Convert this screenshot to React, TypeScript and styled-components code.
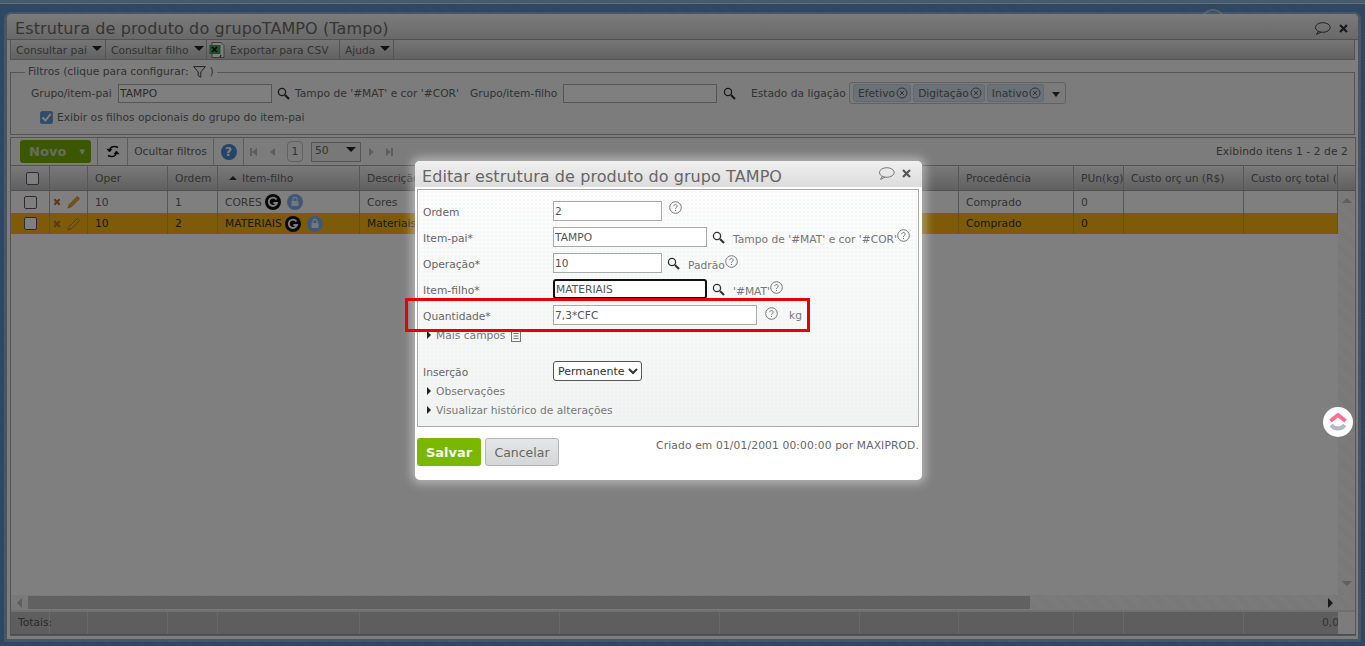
import React from "react";
import styled, { createGlobalStyle } from "styled-components";

const COLS = "39px 38px 80px 50px 142px 200px 160px 140px 99px 115px 50px 120px 94px";
const FONT = `"DejaVu Sans", Verdana, sans-serif`;
const SIZE = "10.7px";

const Global = createGlobalStyle`
  html, body { margin: 0; padding: 0; background: #5e93c9; }
  * { box-sizing: border-box; }
  body { font-family: ${FONT}; font-size: ${SIZE}; color: #555; }
`;

const Page = styled.div`
  position: relative; width: 1365px; height: 646px; overflow: hidden;
  display: flex; flex-direction: column;
  background: #5f92c8 repeating-linear-gradient(45deg, #5a8cc2 0 1px, #6195cb 1px 2px);
`;
const TopBand = styled.div`
  height: 14px; flex: none; border-top: 3px solid #8fb6d8; box-shadow: inset 0 1px 0 #c4dcf0;
  overflow: hidden; display: flex; justify-content: flex-end; padding: 6px 139px 0 0;
`;
const Avatar = styled.span`
  width: 26px; height: 26px; flex: none; border-radius: 50%; border: 2px solid #a8bed2;
`;
const Win = styled.div`
  flex: 1; margin: 0 6px 6px 6px; display: flex; flex-direction: column; min-height: 0;
  background: #fbfbfb; border: 1px solid #9fa9ae; border-top: 0; border-radius: 5px 5px 0 0;
  padding-bottom: 3px; box-shadow: 0 0 0 2px rgba(220, 225, 230, .35);
`;
const WinTitle = styled.div`
  height: 26px; flex: none; display: flex; align-items: center; justify-content: space-between;
  padding: 4px 10px 0 8px; border-bottom: 1px solid #a3a3a3; border-radius: 5px 5px 0 0;
  background: linear-gradient(#f6f6f6, #d2d2d2);
  font-size: 16px; letter-spacing: .1px; color: #6a6a6a; white-space: nowrap;
`;
const TitleTools = styled.div`display: flex; align-items: center; gap: 8px;`;
const Menu = styled.div`
  height: 20px; flex: none; margin: 0 3px 0 3px; display: flex; align-items: stretch;
  border: 1px solid #a8a8a8; border-top: 0; background: linear-gradient(#ececec, #c4c4c4);
`;
const MenuItem = styled.div<{ $w: number; $pad?: number }>`
  width: ${(p) => p.$w}px; display: flex; align-items: center; gap: 5px; padding: 1px 0 0 ${(p) => p.$pad ?? 5}px;
  border-right: 1px solid #a8a8a8; white-space: nowrap; font-size: ${SIZE}; color: #666;
`;
const Caret = styled.span`
  width: 0; height: 0; border-left: 5px solid transparent; border-right: 5px solid transparent;
  border-top: 5px solid #222; margin-bottom: 3px;
`;
const Filters = styled.fieldset`
  margin: 5px 3px 0 3px; padding: 1px 0 0 20px; height: 70px; flex: none;
  border: 1px solid #aaa; background: #f8f8f8; min-width: 0;
`;
const Legend = styled.legend`
  margin-left: -6px; padding: 0 3px; height: 14px; line-height: 16px; display: flex; align-items: center; gap: 4px;
  font-size: ${SIZE}; color: #666;
`;
const FilterRow = styled.div`display: flex; align-items: center; height: 19px; margin-top: 4px;`;
const Caption = styled.span<{ $w?: number }>`
  ${(p) => (p.$w ? `width: ${p.$w}px;` : "")} flex: none; white-space: nowrap; color: #666; font-size: ${SIZE};
`;
const TextField = styled.input<{ $w: number; $focus?: boolean }>`
  width: ${(p) => p.$w}px; height: 20px; flex: none; padding: 0 1px; font: ${SIZE} ${FONT}; color: #555;
  background: #fff; outline: none; border: 1px solid #aaa;
  ${(p) => (p.$focus ? "border: 2px solid #111; border-radius: 3px;" : "")}
`;
const FilterInput = styled(TextField)`height: 19px;`;
const Lens = styled.span<{ $l?: number; $r?: number }>`
  display: inline-flex; flex: none; margin-left: ${(p) => p.$l ?? 5}px; margin-right: ${(p) => p.$r ?? 5}px;
`;
const Chips = styled.div`
  margin: -1px 0 0 4px; width: 217px; height: 22px; display: flex; align-items: center; gap: 2px; padding-left: 3px;
  border: 1px solid #c4c4c4; border-radius: 3px; background: #f4f4f4;
`;
const Chip = styled.span`
  height: 18px; display: inline-flex; align-items: center; gap: 1px; padding: 0 2px 0 4px;
  background: #d6e2ec; border: 1px dotted #b4c6d6; border-radius: 3px; color: #666; font-size: ${SIZE}; white-space: nowrap;
`;
const ChipCaret = styled(Caret)`margin: 2px 0 0 6px; border-width: 5px 4px 0 4px; border-top-color: #333;`;
const OptionRow = styled.label`
  display: flex; align-items: center; gap: 4px; margin: 8px 0 0 9px; color: #666; font-size: ${SIZE}; white-space: nowrap;
`;
const Check = styled.span<{ $on?: boolean }>`
  width: 13px; height: 13px; flex: none; display: inline-flex; align-items: center; justify-content: center;
  border-radius: 2px; border: 1px solid ${(p) => (p.$on ? "#6f9fd0" : "#60506a")};
  background: ${(p) => (p.$on ? "#5f9bd6" : "#fff")};
`;
const GridBox = styled.div`
  flex: 1; min-height: 0; margin: 2px 2px 0 3px; border: 1px solid #aaa; display: flex; flex-direction: column; background: #fff;
`;
const Toolbar = styled.div`
  height: 28px; flex: none; display: flex; align-items: center; background: #f8f8f8; border-bottom: 1px solid #a6a6a6;
`;
const Novo = styled.div`
  width: 71px; height: 23px; margin-left: 9px; display: flex; align-items: center; justify-content: space-between;
  padding: 0 6px 0 9px; background: #77b000; border-radius: 3px; color: #cfd6c0; font-weight: 700; font-size: 13px; letter-spacing: .1px;
`;
const NovoCaret = styled.span`font-size: 7px; color: #ddd;`;
const ToolCell = styled.div<{ $w: number; $line?: boolean }>`
  width: ${(p) => p.$w}px; height: 27px; flex: none; display: flex; align-items: center; justify-content: center;
  ${(p) => (p.$line ? "border-left: 1px solid #bbb;" : "")} color: #666; white-space: nowrap; font-size: ${SIZE};
`;
const HelpDot = styled.span`
  width: 16px; height: 16px; border-radius: 50%; background: #4a8ad0; color: #fff; font: 700 12px ${FONT};
  display: inline-flex; align-items: center; justify-content: center;
`;
const PageBox = styled.span`
  width: 16px; height: 21px; margin-left: 12px; border: 1px solid #c4c4c4; border-radius: 4px; display: inline-flex; align-items: center; justify-content: center; color: #666;
`;
const SizeBox = styled.span`
  width: 50px; height: 20px; margin-left: 8px; border: 1px solid #a8a8a8; background: #f0f0f0; display: inline-flex; align-items: center; justify-content: space-between; padding: 0 4px 2px 3px; color: #666;
`;
const Pager = styled.span<{ $l: number; $r?: boolean }>`
  width: 0; height: 0; margin-left: ${(p) => p.$l}px; border-top: 4px solid transparent; border-bottom: 4px solid transparent;
  ${(p) => (p.$r ? "border-left: 5px solid #bbb;" : "border-right: 5px solid #bbb;")}
`;
const PagerBar = styled.span`width: 2px; height: 8px; background: #bbb;`;
const PagerBarLeft = styled(PagerBar)`margin-left: 6px;`;
const Showing = styled.div`margin-left: auto; margin-right: 7px; color: #666; white-space: nowrap; font-size: ${SIZE}; letter-spacing: .08px;`;

const RowGrid = styled.div<{ $h: number; $bg: string }>`
  height: ${(p) => p.$h}px; flex: none; display: flex; background: ${(p) => p.$bg};
`;
const RowCells = styled.div`
  width: 1327px; overflow: hidden; display: grid; grid-template-columns: ${COLS}; flex: none;
`;
const Cell = styled.div`
  display: flex; align-items: center; gap: 3px; padding: 0 7px; overflow: hidden; white-space: nowrap;
  border-right: 1px solid #aeaeae; color: #666; font-size: ${SIZE};
`;
const HeadCheckCell = styled(Cell)`padding: 0 0 0 15px;`;
const HeadRow = styled(RowGrid)`border-bottom: 1px solid #a0a0a0;`;
const DataCell = styled(Cell)<{ $sel?: boolean }>`
  color: ${(p) => (p.$sel ? "#333" : "#666")};
  ${(p) => (p.$sel ? "border-right-color: #c9a040;" : "")}
`;
const ActionCell = styled(DataCell)`padding: 0 0 0 3px; gap: 6px;`;
const CheckCell = styled(DataCell)`padding: 0 0 0 13px;`;
const SortCaret = styled.span`
  width: 0; height: 0; border-left: 4px solid transparent; border-right: 4px solid transparent; border-bottom: 4px solid #333; margin: 0 2px 0 4px;
`;
const Body = styled.div`flex: 1; min-height: 0; display: flex; flex-direction: column;`;
const BodyMain = styled.div`flex: 1; min-height: 0; display: flex;`;
const Rows = styled.div`flex: 1; min-width: 0; display: flex; flex-direction: column;`;
const VScroll = styled.div`
  width: 17px; flex: none; display: flex; flex-direction: column; justify-content: space-between; align-items: center; padding: 7px 0 9px;
  background: #f4f4f4 repeating-linear-gradient(45deg, #eee 0 1px, #f9f9f9 1px 2px);
`;
const HScroll = styled.div`
  height: 15px; flex: none; display: flex; align-items: center; background: #f4f4f4 repeating-linear-gradient(45deg, #eee 0 1px, #f9f9f9 1px 2px);
`;
const HThumb = styled.div`margin-left: 6px; width: 1002px; height: 13px; background: #c2c2c2;`;
const ArrowUp = styled.span<{ $down?: boolean }>`
  width: 0; height: 0; border-left: 5px solid transparent; border-right: 5px solid transparent;
  ${(p) => (p.$down ? "border-top: 5px solid #bfbfbf;" : "border-bottom: 5px solid #bfbfbf;")}
`;
const ArrowSide = styled.span<{ $r?: boolean }>`
  width: 0; height: 0; border-top: 5px solid transparent; border-bottom: 5px solid transparent;
  ${(p) => (p.$r ? "border-left: 5px solid #333; margin-left: 298px;" : "border-right: 5px solid #bbb; margin-left: 6px;")}
`;
const Totals = styled.div`
  height: 25px; flex: none; display: flex; border-top: 2px solid #e0e0e0; border-bottom: 1px solid #999;
  background: #f8f8f8;
`;
const TotalCells = styled(RowCells)`background: #bcbcbc;`;
const TotalCell = styled(Cell)`border-right-color: #d0d0d0; padding-bottom: 2px;`;
const TotalLabel = styled(TotalCell)`overflow: visible; color: #555;`;
const TotalEnd = styled(TotalCell)`padding: 0 0 2px 78px; border-right: 0;`;

const Scrim = styled.div`position: absolute; inset: 0; background: rgba(0, 0, 0, .5);`;
const Dialog = styled.div`
  position: absolute; left: 415px; top: 161px; width: 507px; height: 319px; display: flex; flex-direction: column;
  background: #fff; border-radius: 5px; box-shadow: 0 0 10px 4px rgba(255, 255, 255, .4);
`;
const DlgTitle = styled.div`
  height: 26px; flex: none; display: flex; align-items: center; justify-content: space-between; padding: 4px 11px 0 7px;
  border-radius: 5px 5px 0 0; background: linear-gradient(#f0f0f0, #dcdcdc);
  font-size: 16px; letter-spacing: .08px; color: #666; white-space: nowrap;
`;
const DlgTools = styled(TitleTools)`gap: 7px; margin-top: -5px;`;
const Panel = styled.div`
  margin: 2px 3px 0 2px; height: 238px; flex: none; border: 1px solid #aaa; padding: 11px 0 0 5px;
  background: radial-gradient(#eceeee .6px, transparent .8px) 0 0 / 4px 4px, linear-gradient(#fdfdfd, #f1f3f3);
`;
const FormRow = styled.div`
  position: relative; display: flex; align-items: center; height: 20px; margin-bottom: 6px;
`;
const Label = styled.span`width: 130px; flex: none; padding-top: 3px; color: #666; font-size: ${SIZE};`;
const Hint = styled.span`color: #777; font-size: ${SIZE}; white-space: nowrap; margin-top: 4px;`;
const UnitHint = styled(Hint)`margin-top: 0;`;
const QHelp = styled.span<{ $l?: number; $t?: number; $r?: number }>`
  display: inline-flex; flex: none; margin-left: ${(p) => p.$l ?? 0}px; margin-right: ${(p) => p.$r ?? 0}px;
  margin-top: ${(p) => p.$t ?? 0}px;
`;
const RedBox = styled.div`
  position: absolute; left: -18px; top: -7px; width: 405px; height: 34px; border: 3px solid #e60000; pointer-events: none;
`;
const Toggle = styled.div<{ $t?: number }>`
  display: flex; align-items: center; gap: 5px; height: 14px; margin: ${(p) => p.$t ?? 0}px 0 0 4px; color: #777; font-size: ${SIZE}; white-space: nowrap;
`;
const Tri = styled.span`
  width: 0; height: 0; border-top: 4px solid transparent; border-bottom: 4px solid transparent; border-left: 4px solid #222;
`;
const InsertRow = styled(FormRow)`margin: 19px 0 3px;`;
const Select = styled.select`
  width: 89px; height: 20px; font: 11px ${FONT}; color: #333; background: #fff; border: 1px solid #555; border-radius: 3px; padding: 0;
`;
const Footer = styled.div`
  display: flex; align-items: flex-start; margin: 11px 3px 0 2px;
`;
const Save = styled.button`
  width: 64px; height: 28px; border: 0; border-radius: 3px; background: #7ab800; color: #f4f4f4; font: 700 13px ${FONT}; padding: 0;
`;
const Cancel = styled.button`
  width: 74px; height: 28px; margin-left: 4px; border: 1px solid #b5b5b5; border-radius: 3px; background: linear-gradient(#e4e6e8, #d4d6d8);
  color: #666; font: 12.5px ${FONT}; padding: 1px 0 0;
`;
const Created = styled.div`margin-left: auto; margin-top: 1px; color: #666; font-size: ${SIZE}; letter-spacing: .14px; white-space: nowrap;`;
const Logo = styled.div`
  position: absolute; left: 1323px; top: 407px; width: 30px; height: 30px; border-radius: 50%; background: #fff;
  display: flex; align-items: center; justify-content: center;
`;

const Search = ({ c = "#333" }: { c?: string }) => (
  <svg width="13" height="13" viewBox="0 0 13 13" fill="none" stroke={c}>
    <circle cx="5" cy="5" r="3.6" strokeWidth="1.3" />
    <path d="M8 8l4 4" strokeWidth="2.2" />
  </svg>
);
const Help = ({ s = 13, c = "#777" }: { s?: number; c?: string }) => (
  <svg width={s} height={s} viewBox="0 0 13 13" fill="none" stroke={c}>
    <circle cx="6.5" cy="6.5" r="5.8" />
    <path d="M4.8 5.2c0-2.2 3.4-2.2 3.4-.1 0 1.3-1.7 1.3-1.7 2.8" />
    <path d="M6.5 9v1" />
  </svg>
);
const Bubble = ({ c = "#444" }: { c?: string }) => (
  <svg width="17" height="13" viewBox="0 0 17 13" fill="none" stroke={c}>
    <ellipse cx="8.8" cy="5.5" rx="7.4" ry="4.8" />
    <path d="M4.5 9.2 2.5 12.4 7 10.2" />
  </svg>
);
const Cross = ({ c = "#333" }: { c?: string }) => (
  <svg width="9" height="9" viewBox="0 0 9 9" stroke={c} strokeWidth="2.2"><path d="M1 1l7 7M8 1 1 8" /></svg>
);
const Funnel = () => (
  <svg width="13" height="12" viewBox="0 0 13 12" fill="#f8f8f8" stroke="#444"><path d="M.6.6h11.8L7.8 6v5.2L5.2 9.6V6z" /></svg>
);
const Excel = () => (
  <svg width="16" height="16" viewBox="0 0 16 16">
    <path d="M3 .5h9l3 3v12H3z" fill="#fff" stroke="#777" />
    <rect x=".5" y="3" width="11" height="9" fill="#3fa04c" />
    <path d="M3 5l5 5M8 5l-5 5" stroke="#111" strokeWidth="1.6" />
    <path d="M12 13l-1 2" stroke="#333" strokeWidth="1.2" />
  </svg>
);
const Refresh = () => (
  <svg width="14" height="13" viewBox="0 0 14 13" fill="none" stroke="#111" strokeWidth="1.5">
    <path d="M12 2.5C9.5 1 6 1 4.5 3.2L3.6 6" />
    <path d="M.8 3.8 3.5 7 6 4" fill="#111" strokeWidth=".8" />
    <path d="M2 10.5c2.5 1.5 6 1.5 7.5-.7L10.4 7" />
    <path d="M13.2 9.2 10.5 6 8 9" fill="#111" strokeWidth=".8" />
  </svg>
);
const XMark = () => (
  <svg width="8" height="8" viewBox="0 0 9 9" stroke="#b8703a" strokeWidth="2.4"><path d="M1.5 1.5l6 6M7.5 1.5l-6 6" /></svg>
);
const Pencil = ({ sel }: { sel?: boolean }) => (
  <svg width="14" height="14" viewBox="0 0 15 15" fill="none">
    <path d="M1 14l1.6-4L11 1.6l2.4 2.4L5 12.4z" fill={sel ? "none" : "#e8a838"} stroke={sel ? "#a87a10" : "#d08a20"} />
    {sel ? <path d="M3 12l8-8" stroke="#d8c080" /> : null}
  </svg>
);
const GBadge = () => (
  <svg width="16" height="16" viewBox="0 0 16 16">
    <circle cx="8" cy="8" r="8" fill="#111" />
    <path d="M11.5 5.5A4.2 4.2 0 1 0 12 9H8.4" fill="none" stroke="#fff" strokeWidth="1.9" />
  </svg>
);
const LockBadge = () => (
  <svg width="16" height="16" viewBox="0 0 16 16">
    <circle cx="8" cy="8" r="8" fill="#7fb0ec" />
    <rect x="4.5" y="7" width="7" height="5" rx=".6" fill="#e8eef6" />
    <path d="M6 7V5.4a2 2 0 0 1 4 0V7" fill="none" stroke="#e8eef6" strokeWidth="1.1" />
  </svg>
);
const ChipX = () => (
  <svg width="12" height="12" viewBox="0 0 12 12" fill="none" stroke="#666">
    <circle cx="6" cy="6" r="5" />
    <path d="M4 4l4 4M8 4l-4 4" />
  </svg>
);
const Tick = () => (
  <svg width="11" height="11" viewBox="0 0 11 11" fill="none" stroke="#fff" strokeWidth="2"><path d="M1.5 5.5 4.5 8.5 9.5 2" /></svg>
);
const Doc = () => (
  <svg width="10" height="12" viewBox="0 0 10 12" fill="none" stroke="#777"><rect x=".5" y=".5" width="9" height="11" /><path d="M2.5 3.5h5M2.5 6h5M2.5 8.5h5" /></svg>
);
const ClickUp = () => (
  <svg width="20" height="20" viewBox="0 0 20 20" fill="none" strokeWidth="4">
    <path d="M2.5 9 10 3l7.5 6" stroke="#fb6f8e" />
    <path d="M3.2 13C6.5 17.5 13.5 17.5 16.8 13" stroke="#b4b8c2" />
  </svg>
);

const heads = ["Oper", "Ordem", "Item-filho", "Descrição", "", "", "Perdas", "Procedência", "PUn(kg)", "Custo orç un (R$)", "Custo orç total (R$)"];

const DataRow = ({ sel, ordem, item, desc, h }: { sel?: boolean; ordem: string; item: string; desc: string; h: number }) => (
  <RowGrid $h={h} $bg={sel ? "#fab610" : "#fff"}>
    <RowCells>
      <CheckCell $sel={sel}><Check /></CheckCell>
      <ActionCell $sel={sel}><XMark /><Pencil sel={sel} /></ActionCell>
      <DataCell $sel={sel}>10</DataCell>
      <DataCell $sel={sel}>{ordem}</DataCell>
      <DataCell $sel={sel}>{item}<GBadge /><QHelp $l={3}><LockBadge /></QHelp></DataCell>
      <DataCell $sel={sel}>{desc}</DataCell>
      <DataCell $sel={sel} />
      <DataCell $sel={sel} />
      <DataCell $sel={sel} />
      <DataCell $sel={sel}>Comprado</DataCell>
      <DataCell $sel={sel}>0</DataCell>
      <DataCell $sel={sel} />
      <DataCell $sel={sel} />
    </RowCells>
  </RowGrid>
);

export default function App() {
  return (
    <Page>
      <Global />
      <TopBand><Avatar /></TopBand>
      <Win>
        <WinTitle>
          <span>Estrutura de produto do grupoTAMPO (Tampo)</span>
          <TitleTools><Bubble /><Cross /></TitleTools>
        </WinTitle>
        <Menu>
          <MenuItem $w={95}>Consultar pai<Caret /></MenuItem>
          <MenuItem $w={101}>Consultar filho<Caret /></MenuItem>
          <MenuItem $w={133} $pad={2}><Excel />Exportar para CSV</MenuItem>
          <MenuItem $w={54}>Ajuda<Caret /></MenuItem>
        </Menu>
        <Filters>
          <Legend>Filtros (clique para configurar:<Funnel />)</Legend>
          <FilterRow>
            <Caption $w={87}>Grupo/item-pai</Caption>
            <FilterInput $w={154} defaultValue="TAMPO" />
            <Lens><Search /></Lens>
            <Caption $w={175}>Tampo de '#MAT' e cor '#COR'</Caption>
            <Caption $w={93}>Grupo/item-filho</Caption>
            <FilterInput $w={154} />
            <Lens $l={6} $r={15}><Search /></Lens>
            <Caption $w={94}>Estado da ligação</Caption>
            <Chips>
              <Chip>Efetivo<ChipX /></Chip>
              <Chip>Digitação<ChipX /></Chip>
              <Chip>Inativo<ChipX /></Chip>
              <ChipCaret />
            </Chips>
          </FilterRow>
          <OptionRow><Check $on><Tick /></Check>Exibir os filhos opcionais do grupo do item-pai</OptionRow>
        </Filters>
        <GridBox>
          <Toolbar>
            <Novo>Novo<NovoCaret>▼</NovoCaret></Novo>
            <ToolCell $w={6} />
            <ToolCell $w={30} $line><Refresh /></ToolCell>
            <ToolCell $w={86} $line>Ocultar filtros</ToolCell>
            <ToolCell $w={30} $line><HelpDot>?</HelpDot></ToolCell>
            <ToolCell $w={1} $line />
            <PagerBarLeft /><Pager $l={0} />
            <Pager $l={13} />
            <PageBox>1</PageBox>
            <SizeBox>50<Caret /></SizeBox>
            <Pager $l={8} $r />
            <Pager $l={12} $r /><PagerBar />
            <Showing>Exibindo itens 1 - 2 de 2</Showing>
          </Toolbar>
          <HeadRow $h={25} $bg="linear-gradient(#f4f4f4, #c0c0c0)">
            <RowCells>
              <HeadCheckCell><Check /></HeadCheckCell>
              <Cell />
              {heads.map((h, i) => (
                <Cell key={i}>
                  {h === "Item-filho" ? <SortCaret /> : null}
                  {h}
                </Cell>
              ))}
            </RowCells>
          </HeadRow>
          <Body>
            <BodyMain>
              <Rows>
                <DataRow ordem="1" item="CORES" desc="Cores" h={22} />
                <DataRow sel ordem="2" item="MATERIAIS" desc="Materiais" h={21} />
              </Rows>
              <VScroll><ArrowUp /><ArrowUp $down /></VScroll>
            </BodyMain>
            <HScroll>
              <ArrowSide />
              <HThumb />
              <ArrowSide $r />
            </HScroll>
          </Body>
          <Totals>
            <TotalCells>
              <TotalLabel>Totais:</TotalLabel>
              {Array.from({ length: 11 }, (_, i) => <TotalCell key={i} />)}
              <TotalEnd>0,00</TotalEnd>
            </TotalCells>
          </Totals>
        </GridBox>
      </Win>
      <Scrim />
      <Logo><ClickUp /></Logo>
      <Dialog>
        <DlgTitle>
          <span>Editar estrutura de produto do grupo TAMPO</span>
          <DlgTools><Bubble c="#777" /><Cross c="#555" /></DlgTools>
        </DlgTitle>
        <Panel>
          <FormRow><Label>Ordem</Label><TextField $w={109} defaultValue="2" /><QHelp $l={7} $t={-7}><Help /></QHelp></FormRow>
          <FormRow><Label>Item-pai*</Label><TextField $w={154} defaultValue="TAMPO" /><Lens><Search /></Lens><QHelp $l={3} /><Hint>Tampo de '#MAT' e cor '#COR'</Hint><QHelp $t={-4}><Help /></QHelp></FormRow>
          <FormRow><Label>Operação*</Label><TextField $w={109} defaultValue="10" /><Lens><Search /></Lens><QHelp $l={3} /><Hint>Padrão</Hint><QHelp $t={-4}><Help /></QHelp></FormRow>
          <FormRow><Label>Item-filho*</Label><TextField $w={154} $focus defaultValue="MATERIAIS" /><Lens><Search /></Lens><QHelp $l={3} /><Hint>'#MAT'</Hint><QHelp $t={-4}><Help /></QHelp></FormRow>
          <FormRow>
            <Label>Quantidade*</Label><TextField $w={204} defaultValue="7,3*CFC" /><QHelp $l={8} $r={11} $t={-4}><Help /></QHelp><UnitHint>kg</UnitHint>
            <RedBox />
          </FormRow>
          <Toggle $t={-3}><Tri />Mais campos<QHelp $l={1} $t={2}><Doc /></QHelp></Toggle>
          <InsertRow><Label>Inserção</Label><Select defaultValue="Permanente"><option>Permanente</option></Select></InsertRow>
          <Toggle><Tri />Observações</Toggle>
          <Toggle $t={5}><Tri />Visualizar histórico de alterações</Toggle>
        </Panel>
        <Footer>
          <Save>Salvar</Save>
          <Cancel>Cancelar</Cancel>
          <Created>Criado em 01/01/2001 00:00:00 por MAXIPROD.</Created>
        </Footer>
      </Dialog>
    </Page>
  );
}
